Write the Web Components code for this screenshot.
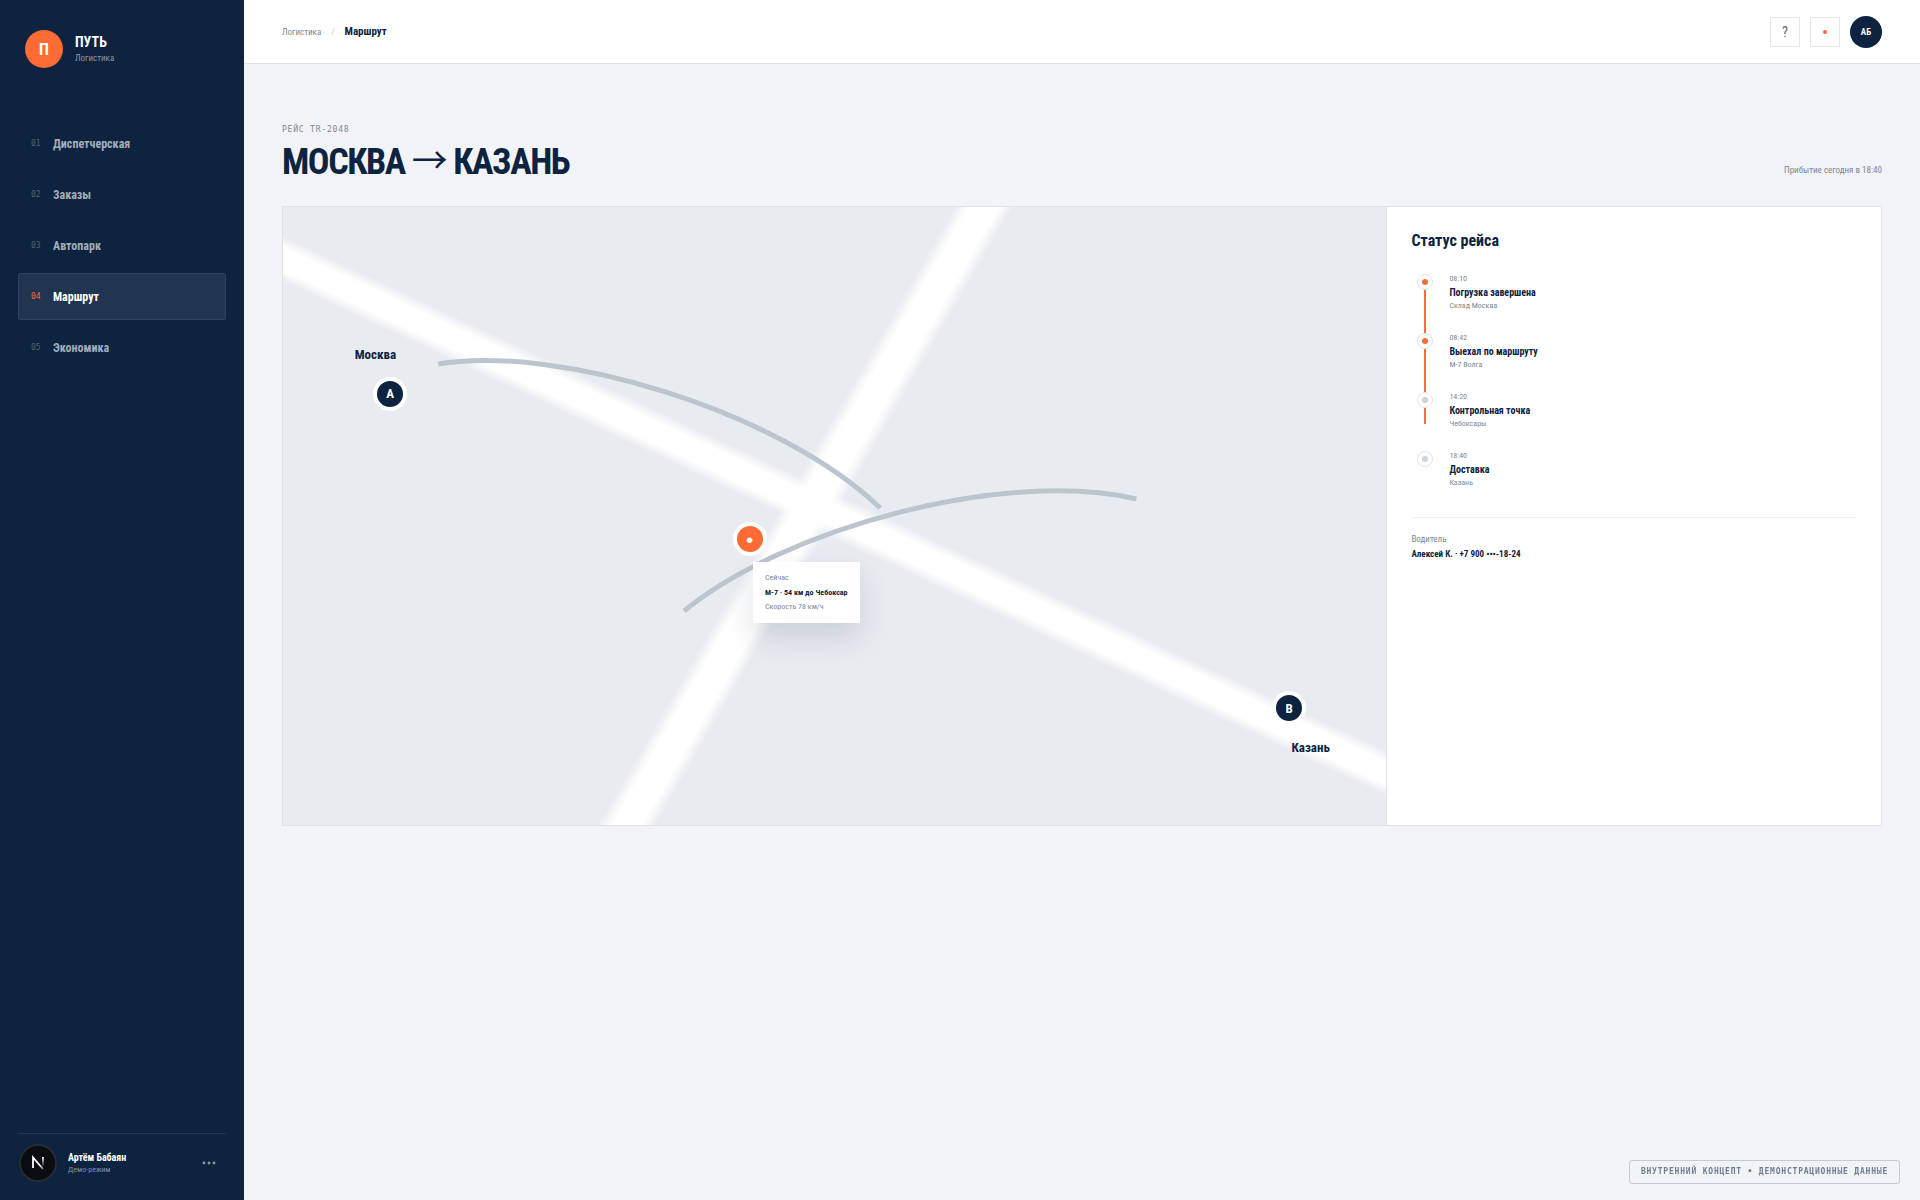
<!DOCTYPE html>
<html lang="ru">
<head>
<meta charset="utf-8">
<title>Путь · Маршрут</title>
<style>
  :root {
    --navy: #0d2340;
    --orange: #ff6b35;
    --muted: #7c8798;
    --line: #dfe3e9;
    --bg: #f1f3f7;
    --mono: "DejaVu Sans Mono", "Liberation Mono", monospace;
  }

  body {
    margin: 0;
    background: var(--bg);
    color: var(--navy);
    font-family: "Arial Narrow", "Liberation Sans Narrow", "Roboto Condensed", Roboto, sans-serif;
    font-size: 12px;
  }

  /* the taller font must not stretch the heading's line */
  .arrow {
    font-family: "Noto Sans CJK JP", sans-serif;
    font-weight: 400;
    line-height: 0;
  }
</style>
</head>
<body>
<app-shell>
  <side-nav slot="nav">
    <nav-item num="01">Диспетчерская</nav-item>
    <nav-item num="02">Заказы</nav-item>
    <nav-item num="03">Автопарк</nav-item>
    <nav-item num="04" active>Маршрут</nav-item>
    <nav-item num="05">Экономика</nav-item>
  </side-nav>
  <top-bar slot="top"></top-bar>

  <page-heading>
    <span slot="eyebrow">РЕЙС TR-2048</span>
    МОСКВА <span class="arrow">→</span> КАЗАНЬ
    <span slot="note">Прибытие сегодня в 18:40</span>
  </page-heading>

  <route-panel>
    <route-map slot="map">
      <map-label style="--x: 6.5%; --y: 24%">Москва</map-label>
      <map-pin style="--x: 9.7%; --y: 30.2%">A</map-pin>
      <map-pin live style="--x: 42.3%; --y: 53.8%">●</map-pin>
      <map-pin style="--x: 91.2%; --y: 81.1%">B</map-pin>
      <map-label style="--x: 91.4%; --y: 87.6%">Казань</map-label>
      <map-tip style="--x: 42.6%; --y: 57.5%">
        <span slot="label">Сейчас</span>
        М-7 · 54 км до Чебоксар
        <span slot="note">Скорость 78 км/ч</span>
      </map-tip>
    </route-map>
    <trip-status>
      <trip-step time="08:10" place="Склад Москва" done>Погрузка завершена</trip-step>
      <trip-step time="08:42" place="М-7 Волга" done>Выехал по маршруту</trip-step>
      <trip-step time="14:20" place="Чебоксары">Контрольная точка</trip-step>
      <trip-step time="18:40" place="Казань">Доставка</trip-step>
      <span slot="driver">Алексей К. · +7 900 •••-18-24</span>
    </trip-status>
  </route-panel>

  <demo-badge slot="badge">ВНУТРЕННИЙ КОНЦЕПТ • ДЕМОНСТРАЦИОННЫЕ ДАННЫЕ</demo-badge>
</app-shell>

<script>
// small helper: registers an element whose shadow root is cloned from a template
function define(name, html, setup) {
  const template = document.createElement('template');
  template.innerHTML = html;

  window.customElements.define(name, class extends HTMLElement {
    constructor() {
      super();
      this.attachShadow({ mode: 'open' });
      this.shadowRoot.appendChild(template.content.cloneNode(true));
    }

    connectedCallback() {
      if (setup) {
        setup(this, this.shadowRoot);
      }
    }
  });
}

define('app-shell', `
  <style>
    :host {
      display: grid;
      grid-template-columns: 244px 1fr;
      min-height: 100vh;
    }

    .page {
      display: flex;
      flex-direction: column;
      min-width: 0;
    }

    main {
      padding: 60px 38px;
    }
  </style>
  <slot name="nav"></slot>
  <div class="page">
    <slot name="top"></slot>
    <main><slot></slot></main>
  </div>
  <slot name="badge"></slot>
`);

define('side-nav', `
  <style>
    :host {
      display: flex;
      flex-direction: column;
      box-sizing: border-box;
      height: 100vh;
      padding: 30px 18px 18px;
      background: var(--navy);
      color: #fff;
    }

    .brand {
      display: flex;
      align-items: center;
      gap: 12px;
      padding: 0 7px;
      margin-bottom: 52px;
      color: inherit;
      text-decoration: none;
    }

    .mark {
      display: grid;
      place-items: center;
      width: 38px;
      height: 38px;
      border-radius: 50%;
      background: var(--orange);
      font-size: 16px;
      font-weight: bold;
    }

    .name {
      display: block;
      font-size: 14px;
      line-height: 18px;
    }

    .brand small {
      display: block;
      font-size: 9px;
      line-height: 14px;
      color: #8b97a8;
    }

    nav {
      display: flex;
      flex-direction: column;
      gap: 4px;
    }

    .user {
      display: flex;
      align-items: center;
      gap: 11px;
      margin-top: auto;
      padding: 10px 10px 0 1px;
      border-top: 1px solid #22364f;
    }

    .logo {
      width: 38px;
      height: 38px;
    }

    .who {
      flex: 1;
      font-size: 10px;
      line-height: 13px;
    }

    .who small {
      display: block;
      font-size: 8px;
      line-height: 12px;
      color: #8290a3;
    }

    button {
      padding: 0;
      border: 0;
      background: none;
      color: #8b97a8;
      font: inherit;
    }

    .dots {
      display: block;
      width: 14px;
      height: 4px;
    }
  </style>
  <a class="brand" href="#">
    <span class="mark">П</span>
    <span><b class="name">ПУТЬ</b><small>Логистика</small></span>
  </a>
  <nav><slot></slot></nav>
  <div class="user">
    <svg class="logo" viewBox="0 0 38 38">
      <defs>
        <linearGradient id="leg" x1="16" y1="16" x2="25" y2="26" gradientUnits="userSpaceOnUse">
          <stop offset="0.5" stop-color="#fff"/>
          <stop offset="1" stop-color="#fff" stop-opacity="0.3"/>
        </linearGradient>
        <linearGradient id="bar" x1="0" y1="13" x2="0" y2="23" gradientUnits="userSpaceOnUse">
          <stop offset="0" stop-color="#fff"/>
          <stop offset="1" stop-color="#fff" stop-opacity="0"/>
        </linearGradient>
      </defs>
      <circle cx="19" cy="19" r="18" fill="#0a0c10" stroke="#262b33" stroke-width="2"/>
      <path d="M14 24V13.500L24 25" fill="none" stroke="url(#leg)" stroke-width="1.800"/>
      <path d="M24 13V22" stroke="url(#bar)" stroke-width="1.800"/>
    </svg>
    <div class="who"><b>Артём Бабаян</b><small>Демо-режим</small></div>
    <button type="button" aria-label="Меню">
      <svg class="dots" viewBox="0 0 14 4" fill="currentColor">
        <circle cx="2" cy="2" r="1.400"/><circle cx="7" cy="2" r="1.400"/><circle cx="12" cy="2" r="1.400"/>
      </svg>
    </button>
  </div>
`);

define('nav-item', `
  <style>
    :host {
      display: block;
    }

    a {
      display: flex;
      align-items: center;
      gap: 12px;
      box-sizing: border-box;
      height: 47px;
      padding: 0 12px;
      border: 1px solid transparent;
      border-radius: 2px;
      color: #a4adba;
      font-size: 12px;
      font-weight: bold;
      text-decoration: none;
    }

    .num {
      width: 10px;
      color: #52627a;
      font-family: var(--mono);
      font-size: 8px;
      font-weight: normal;
    }

    :host([active]) a {
      border-color: #31435c;
      background: #213450;
      color: #fff;
    }

    :host([active]) .num {
      color: var(--orange);
    }
  </style>
  <a href="#"><span class="num"></span><slot></slot></a>
`, (el, root) => {
  root.querySelector('.num').textContent = el.getAttribute('num');

  if (el.hasAttribute('active')) {
    root.querySelector('a').setAttribute('aria-current', 'page');
  }
});

define('top-bar', `
  <style>
    :host {
      display: flex;
      align-items: center;
      justify-content: space-between;
      box-sizing: border-box;
      height: 64px;
      padding: 0 38px;
      border-bottom: 1px solid var(--line);
      background: #fff;
    }

    .crumbs {
      display: flex;
      align-items: baseline;
      gap: 10px;
      font-size: 9px;
    }

    .crumbs a {
      color: var(--muted);
      text-decoration: none;
    }

    .crumbs b {
      font-size: 11px;
    }

    .sep {
      color: #c3cad3;
    }

    .tools {
      display: flex;
      align-items: center;
      gap: 10px;
    }

    button {
      width: 30px;
      height: 30px;
      padding: 0;
      border: 1px solid #e4e7ec;
      background: #fff;
      color: #5c6778;
      font: inherit;
      font-size: 14px;
    }

    .alert {
      display: grid;
      place-items: center;
    }

    .alert::before {
      content: "";
      width: 4px;
      height: 4px;
      border-radius: 50%;
      background: var(--orange);
    }

    .avatar {
      display: grid;
      place-items: center;
      width: 32px;
      height: 32px;
      border-radius: 50%;
      background: var(--navy);
      color: #fff;
      font-size: 9px;
      font-weight: bold;
    }
  </style>
  <div class="crumbs"><a href="#">Логистика</a><span class="sep">/</span><b>Маршрут</b></div>
  <div class="tools">
    <button type="button">?</button>
    <button type="button" class="alert" aria-label="Уведомления"></button>
    <span class="avatar">АБ</span>
  </div>
`);

define('page-heading', `
  <style>
    :host {
      display: flex;
      align-items: flex-end;
      justify-content: space-between;
      margin-bottom: 24px;
    }

    .eyebrow {
      color: var(--muted);
      font-family: var(--mono);
      font-size: 8px;
      line-height: 12px;
      letter-spacing: 0.1em;
    }

    h1 {
      margin: 6px 0 0;
      font-size: 36px;
      line-height: 40px;
      letter-spacing: -0.04em;
    }

    .note {
      padding-bottom: 5px;
      color: var(--muted);
      font-size: 9px;
      line-height: 14px;
    }
  </style>
  <div>
    <div class="eyebrow"><slot name="eyebrow"></slot></div>
    <h1><slot></slot></h1>
  </div>
  <div class="note"><slot name="note"></slot></div>
`);

define('route-panel', `
  <style>
    :host {
      display: grid;
      grid-template-columns: 1.45fr .65fr;
      min-height: 618px;
      border: 1px solid var(--line);
      background: #fff;
    }
  </style>
  <slot name="map"></slot>
  <slot></slot>
`);

define('route-map', `
  <style>
    :host {
      display: block;
      position: relative;
      overflow: hidden;
      background:
        linear-gradient(25deg, transparent 48%, #fff 49%, #fff 51%, transparent 52%),
        linear-gradient(120deg, transparent 46%, #fff 47%, #fff 49%, transparent 50%),
        #e8ecf1;
    }

    svg {
      position: absolute;
      width: 100%;
      height: 100%;
    }
  </style>
  <svg viewBox="0 0 1103 618" preserveAspectRatio="none" fill="none" stroke="#bcc5cf" stroke-width="5">
    <path d="M155 157C275 137 496 204 597 301"/>
    <path d="M401 404C500 322 722 261 853 292"/>
  </svg>
  <slot></slot>
`);

define('map-pin', `
  <style>
    :host {
      position: absolute;
      left: var(--x);
      top: var(--y);
      display: grid;
      place-items: center;
      width: 26px;
      height: 26px;
      margin: -17px;
      border: 4px solid #fff;
      border-radius: 50%;
      background: var(--navy);
      color: #fff;
      font-size: 13px;
      font-weight: bold;
    }

    :host([live]) {
      background: var(--orange);
    }
  </style>
  <slot></slot>
`);

define('map-label', `
  <style>
    :host {
      position: absolute;
      left: var(--x);
      top: var(--y);
      font-size: 13px;
      font-weight: bold;
      line-height: 16px;
      margin-top: -8px;
    }
  </style>
  <slot></slot>
`);

define('map-tip', `
  <style>
    :host {
      position: absolute;
      left: var(--x);
      top: var(--y);
      padding: 9px 12px;
      background: #fff;
      box-shadow: 0 14px 30px rgba(13, 35, 64, 0.14);
      white-space: nowrap;
    }

    small {
      display: block;
      color: var(--muted);
      font-size: 8px;
      line-height: 14px;
    }

    b {
      display: block;
      font-size: 8px;
      line-height: 15px;
    }
  </style>
  <small><slot name="label"></slot></small>
  <b><slot></slot></b>
  <small><slot name="note"></slot></small>
`);

define('trip-status', `
  <style>
    :host {
      display: block;
      padding: 24px;
      border-left: 1px solid var(--line);
    }

    h2 {
      margin: 0 0 22px;
      font-size: 16px;
      line-height: 20px;
    }

    .steps {
      position: relative;
      display: flex;
      flex-direction: column;
      gap: 20px;
    }

    /* travelled part of the way, runs behind the dots */
    .steps::before {
      content: "";
      position: absolute;
      left: 13px;
      top: 8px;
      bottom: 65px;
      width: 2px;
      background: var(--orange);
    }

    .driver {
      margin-top: 28px;
      padding-top: 14px;
      border-top: 1px solid #eceff3;
    }

    .driver small {
      display: block;
      color: var(--muted);
      font-size: 9px;
      line-height: 14px;
    }

    .driver b {
      font-size: 9px;
      line-height: 16px;
    }
  </style>
  <h2>Статус рейса</h2>
  <div class="steps"><slot></slot></div>
  <div class="driver"><small>Водитель</small><b><slot name="driver"></slot></b></div>
`);

define('trip-step', `
  <style>
    :host {
      display: flex;
      gap: 16px;
      position: relative;
      padding-left: 6px;
    }

    .dot {
      display: grid;
      place-items: center;
      box-sizing: border-box;
      width: 16px;
      height: 16px;
      margin-top: 1px;
      border: 1px solid #dfe5ea;
      border-radius: 50%;
      background: #fff;
    }

    .dot::before {
      content: "";
      width: 6px;
      height: 6px;
      border-radius: 50%;
      background: #ccd2d9;
    }

    :host([done]) .dot::before {
      background: var(--orange);
    }

    small {
      display: block;
      color: var(--muted);
      font-size: 8px;
      line-height: 12px;
    }

    b {
      display: block;
      font-size: 10px;
      line-height: 15px;
    }
  </style>
  <span class="dot"></span>
  <div>
    <small class="time"></small>
    <b><slot></slot></b>
    <small class="place"></small>
  </div>
`, (el, root) => {
  root.querySelector('.time').textContent = el.getAttribute('time');
  root.querySelector('.place').textContent = el.getAttribute('place');
});

define('demo-badge', `
  <style>
    :host {
      position: fixed;
      right: 20px;
      bottom: 16px;
      padding: 5px 11px;
      border: 1px solid #c3cad4;
      border-radius: 3px;
      color: #6f7d90;
      font-family: var(--mono);
      font-size: 8px;
      font-weight: bold;
      line-height: 12px;
      letter-spacing: 0.1em;
    }
  </style>
  <slot></slot>
`);
</script>
</body>
</html>
